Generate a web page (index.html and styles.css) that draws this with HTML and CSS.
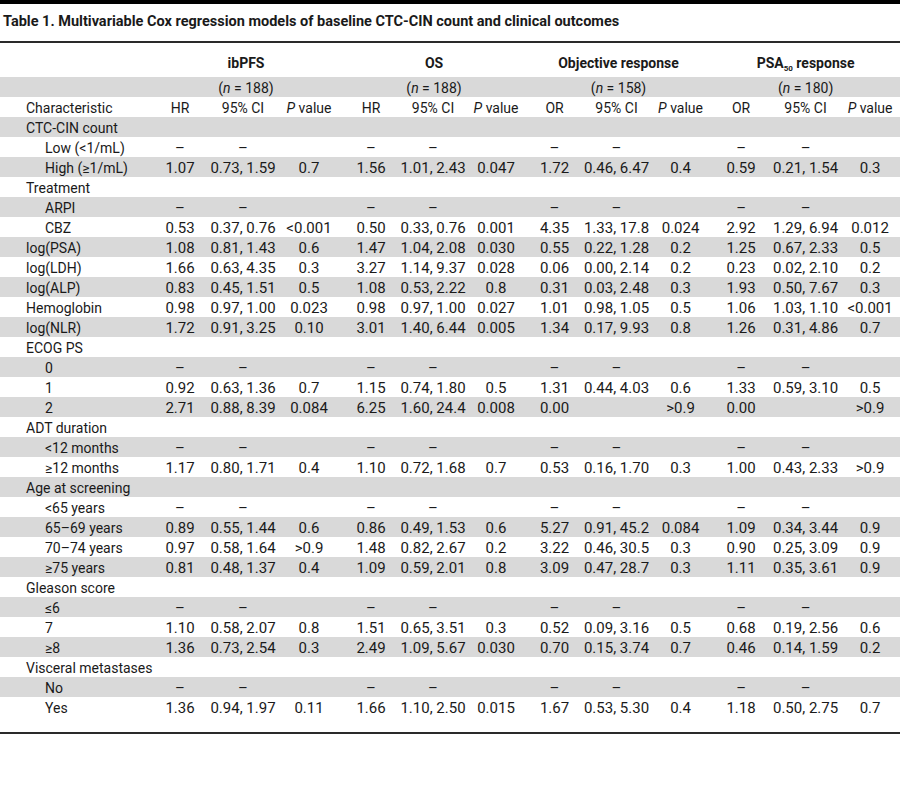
FILE: index.html
```html
<!DOCTYPE html>
<html lang="en">
<head>
<meta charset="utf-8">
<title>Table 1</title>
<link rel="stylesheet" href="styles.css">
</head>
<body>
<div class="page">
  <div class="title">Table 1. Multivariable Cox regression models of baseline CTC-CIN count and clinical outcomes</div>
  <div class="table-wrap">
    <table class="tbl">
      <colgroup>
        <col class="c-lbl"><col class="c60"><col class="c66"><col class="c66">
        <col class="c58"><col class="c66"><col class="c60">
        <col class="c57"><col class="c67"><col class="c61">
        <col class="c60"><col class="c69"><col class="c60">
      </colgroup>
      <thead>
        <tr class="grp">
          <th></th>
          <th colspan="3">ibPFS</th>
          <th colspan="3">OS</th>
          <th colspan="3">Objective response</th>
          <th colspan="3">PSA<sub>50</sub> response</th>
        </tr>
        <tr class="nrow">
          <td></td>
          <td colspan="3">(<i>n</i> = 188)</td>
          <td colspan="3">(<i>n</i> = 188)</td>
          <td colspan="3">(<i>n</i> = 158)</td>
          <td colspan="3">(<i>n</i> = 180)</td>
        </tr>
        <tr class="cols">
          <td class="cat">Characteristic</td>
          <td>HR</td><td>95% CI</td><td><i>P</i> value</td>
          <td>HR</td><td>95% CI</td><td><i>P</i> value</td>
          <td>OR</td><td>95% CI</td><td><i>P</i> value</td>
          <td>OR</td><td>95% CI</td><td><i>P</i> value</td>
        </tr>
      </thead>
      <tbody>
        <tr><td class="cat">CTC-CIN count</td><td></td><td></td><td></td><td></td><td></td><td></td><td></td><td></td><td></td><td></td><td></td><td></td></tr>
        <tr><td class="sub">Low (&lt;1/mL)</td><td>–</td><td>–</td><td></td><td>–</td><td>–</td><td></td><td>–</td><td>–</td><td></td><td>–</td><td>–</td><td></td></tr>
        <tr><td class="sub">High (≥1/mL)</td><td>1.07</td><td>0.73, 1.59</td><td>0.7</td><td>1.56</td><td>1.01, 2.43</td><td>0.047</td><td>1.72</td><td>0.46, 6.47</td><td>0.4</td><td>0.59</td><td>0.21, 1.54</td><td>0.3</td></tr>
        <tr><td class="cat">Treatment</td><td></td><td></td><td></td><td></td><td></td><td></td><td></td><td></td><td></td><td></td><td></td><td></td></tr>
        <tr><td class="sub">ARPI</td><td>–</td><td>–</td><td></td><td>–</td><td>–</td><td></td><td>–</td><td>–</td><td></td><td>–</td><td>–</td><td></td></tr>
        <tr><td class="sub">CBZ</td><td>0.53</td><td>0.37, 0.76</td><td>&lt;0.001</td><td>0.50</td><td>0.33, 0.76</td><td>0.001</td><td>4.35</td><td>1.33, 17.8</td><td>0.024</td><td>2.92</td><td>1.29, 6.94</td><td>0.012</td></tr>
        <tr><td class="cat">log(PSA)</td><td>1.08</td><td>0.81, 1.43</td><td>0.6</td><td>1.47</td><td>1.04, 2.08</td><td>0.030</td><td>0.55</td><td>0.22, 1.28</td><td>0.2</td><td>1.25</td><td>0.67, 2.33</td><td>0.5</td></tr>
        <tr><td class="cat">log(LDH)</td><td>1.66</td><td>0.63, 4.35</td><td>0.3</td><td>3.27</td><td>1.14, 9.37</td><td>0.028</td><td>0.06</td><td>0.00, 2.14</td><td>0.2</td><td>0.23</td><td>0.02, 2.10</td><td>0.2</td></tr>
        <tr><td class="cat">log(ALP)</td><td>0.83</td><td>0.45, 1.51</td><td>0.5</td><td>1.08</td><td>0.53, 2.22</td><td>0.8</td><td>0.31</td><td>0.03, 2.48</td><td>0.3</td><td>1.93</td><td>0.50, 7.67</td><td>0.3</td></tr>
        <tr><td class="cat">Hemoglobin</td><td>0.98</td><td>0.97, 1.00</td><td>0.023</td><td>0.98</td><td>0.97, 1.00</td><td>0.027</td><td>1.01</td><td>0.98, 1.05</td><td>0.5</td><td>1.06</td><td>1.03, 1.10</td><td>&lt;0.001</td></tr>
        <tr><td class="cat">log(NLR)</td><td>1.72</td><td>0.91, 3.25</td><td>0.10</td><td>3.01</td><td>1.40, 6.44</td><td>0.005</td><td>1.34</td><td>0.17, 9.93</td><td>0.8</td><td>1.26</td><td>0.31, 4.86</td><td>0.7</td></tr>
        <tr><td class="cat">ECOG PS</td><td></td><td></td><td></td><td></td><td></td><td></td><td></td><td></td><td></td><td></td><td></td><td></td></tr>
        <tr><td class="sub">0</td><td>–</td><td>–</td><td></td><td>–</td><td>–</td><td></td><td>–</td><td>–</td><td></td><td>–</td><td>–</td><td></td></tr>
        <tr><td class="sub">1</td><td>0.92</td><td>0.63, 1.36</td><td>0.7</td><td>1.15</td><td>0.74, 1.80</td><td>0.5</td><td>1.31</td><td>0.44, 4.03</td><td>0.6</td><td>1.33</td><td>0.59, 3.10</td><td>0.5</td></tr>
        <tr><td class="sub">2</td><td>2.71</td><td>0.88, 8.39</td><td>0.084</td><td>6.25</td><td>1.60, 24.4</td><td>0.008</td><td>0.00</td><td></td><td>&gt;0.9</td><td>0.00</td><td></td><td>&gt;0.9</td></tr>
        <tr><td class="cat">ADT duration</td><td></td><td></td><td></td><td></td><td></td><td></td><td></td><td></td><td></td><td></td><td></td><td></td></tr>
        <tr><td class="sub">&lt;12 months</td><td>–</td><td>–</td><td></td><td>–</td><td>–</td><td></td><td>–</td><td>–</td><td></td><td>–</td><td>–</td><td></td></tr>
        <tr><td class="sub">≥12 months</td><td>1.17</td><td>0.80, 1.71</td><td>0.4</td><td>1.10</td><td>0.72, 1.68</td><td>0.7</td><td>0.53</td><td>0.16, 1.70</td><td>0.3</td><td>1.00</td><td>0.43, 2.33</td><td>&gt;0.9</td></tr>
        <tr><td class="cat">Age at screening</td><td></td><td></td><td></td><td></td><td></td><td></td><td></td><td></td><td></td><td></td><td></td><td></td></tr>
        <tr><td class="sub">&lt;65 years</td><td>–</td><td>–</td><td></td><td>–</td><td>–</td><td></td><td>–</td><td>–</td><td></td><td>–</td><td>–</td><td></td></tr>
        <tr><td class="sub">65–69 years</td><td>0.89</td><td>0.55, 1.44</td><td>0.6</td><td>0.86</td><td>0.49, 1.53</td><td>0.6</td><td>5.27</td><td>0.91, 45.2</td><td>0.084</td><td>1.09</td><td>0.34, 3.44</td><td>0.9</td></tr>
        <tr><td class="sub">70–74 years</td><td>0.97</td><td>0.58, 1.64</td><td>&gt;0.9</td><td>1.48</td><td>0.82, 2.67</td><td>0.2</td><td>3.22</td><td>0.46, 30.5</td><td>0.3</td><td>0.90</td><td>0.25, 3.09</td><td>0.9</td></tr>
        <tr><td class="sub">≥75 years</td><td>0.81</td><td>0.48, 1.37</td><td>0.4</td><td>1.09</td><td>0.59, 2.01</td><td>0.8</td><td>3.09</td><td>0.47, 28.7</td><td>0.3</td><td>1.11</td><td>0.35, 3.61</td><td>0.9</td></tr>
        <tr><td class="cat">Gleason score</td><td></td><td></td><td></td><td></td><td></td><td></td><td></td><td></td><td></td><td></td><td></td><td></td></tr>
        <tr><td class="sub">≤6</td><td>–</td><td>–</td><td></td><td>–</td><td>–</td><td></td><td>–</td><td>–</td><td></td><td>–</td><td>–</td><td></td></tr>
        <tr><td class="sub">7</td><td>1.10</td><td>0.58, 2.07</td><td>0.8</td><td>1.51</td><td>0.65, 3.51</td><td>0.3</td><td>0.52</td><td>0.09, 3.16</td><td>0.5</td><td>0.68</td><td>0.19, 2.56</td><td>0.6</td></tr>
        <tr><td class="sub">≥8</td><td>1.36</td><td>0.73, 2.54</td><td>0.3</td><td>2.49</td><td>1.09, 5.67</td><td>0.030</td><td>0.70</td><td>0.15, 3.74</td><td>0.7</td><td>0.46</td><td>0.14, 1.59</td><td>0.2</td></tr>
        <tr><td class="cat">Visceral metastases</td><td></td><td></td><td></td><td></td><td></td><td></td><td></td><td></td><td></td><td></td><td></td><td></td></tr>
        <tr><td class="sub">No</td><td>–</td><td>–</td><td></td><td>–</td><td>–</td><td></td><td>–</td><td>–</td><td></td><td>–</td><td>–</td><td></td></tr>
        <tr><td class="sub">Yes</td><td>1.36</td><td>0.94, 1.97</td><td>0.11</td><td>1.66</td><td>1.10, 2.50</td><td>0.015</td><td>1.67</td><td>0.53, 5.30</td><td>0.4</td><td>1.18</td><td>0.50, 2.75</td><td>0.7</td></tr>
      </tbody>
    </table>
  </div>
</div>
</body>
</html>
```
FILE: styles.css
```css
html, body {
  margin: 0;
  padding: 0;
  background: #ffffff;
}

body {
  font-family: Roboto, "Liberation Sans", sans-serif;
  font-size: 14px;
  color: #1a1a1a;
}

.page {
  width: 900px;
  border-top: 4px solid #000000;
}

.title {
  font-weight: 700;
  font-size: 14.5px;
  line-height: 20px;
  padding: 8px 0 9px 3px;
  border-bottom: 2px solid #2a2a2a;
}

.table-wrap {
  padding-bottom: 15px;
  border-bottom: 2px solid #2a2a2a;
}

.tbl {
  width: 900px;
  table-layout: fixed;
  border-collapse: collapse;
  border-spacing: 0;
}

.c-lbl { width: 150px; }
.c57 { width: 57px; }
.c58 { width: 58px; }
.c60 { width: 60px; }
.c61 { width: 61px; }
.c66 { width: 66px; }
.c67 { width: 67px; }
.c69 { width: 69px; }

.tbl th,
.tbl td {
  padding: 2px 0 0 0;
  height: 18px;
  line-height: 18px;
  text-align: center;
  white-space: nowrap;
  font-weight: 400;
  vertical-align: top;
}

.tbl tbody td {
  font-size: 15px;
}

.tbl .grp th {
  font-weight: 700;
  padding-top: 11px;
  padding-bottom: 5px;
}

.tbl sub {
  font-size: 8px;
  line-height: 0;
  vertical-align: -3px;
}

.tbl .nrow {
  background: #d9d9d9;
}

.tbl tbody tr:nth-child(odd) {
  background: #d9d9d9;
}

.tbl td.cat {
  text-align: left;
  padding-left: 26px;
  font-size: 14px;
}

.tbl td.sub {
  text-align: left;
  padding-left: 45px;
  font-size: 14px;
}
```
